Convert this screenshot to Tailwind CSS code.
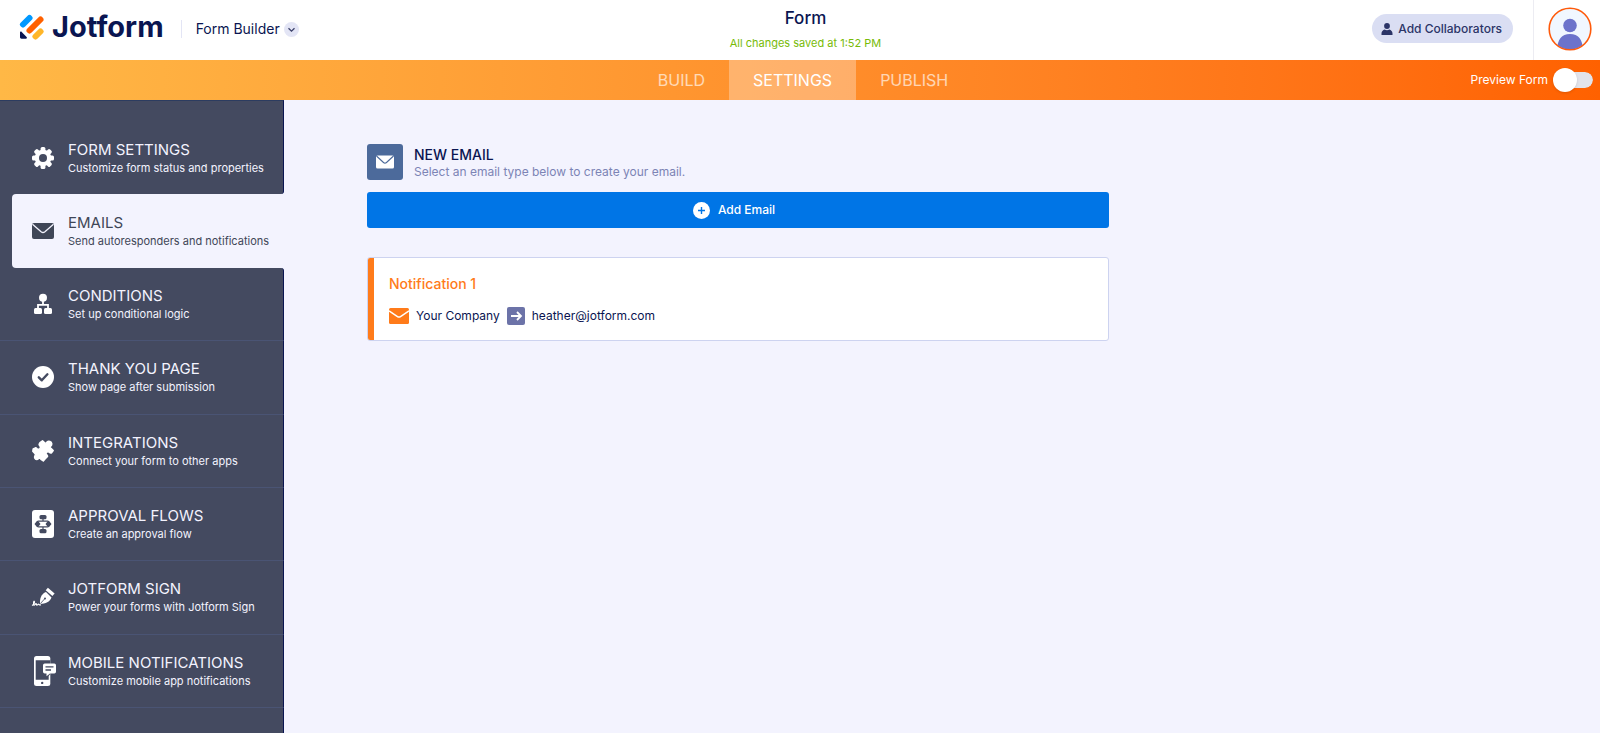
<!DOCTYPE html>
<html lang="en">
<head>
<meta charset="utf-8">
<title>Form Builder - Emails</title>
<script src="https://cdn.jsdelivr.net/npm/@tailwindcss/browser@4"></script>
</head>
<body class="flex min-h-screen flex-col bg-[#f3f3fe] font-['Inter','Liberation_Sans',sans-serif] text-[#0a1551]">

<header class="grid h-15 grid-cols-[1fr_auto_1fr] bg-white pr-2 pl-[19px]">
  <div class="flex items-center pb-[2px]">
    <a href="#" aria-label="Jotform" class="flex items-center gap-[7px] pb-1">
      <svg class="h-[26px] w-[26px]" viewBox="0 0 26 26" fill="none" stroke-linecap="round" stroke-width="6">
        <path d="M4 10.500 10.500 4" stroke="#0099ff"/>
        <path d="M10.500 16.500 21.500 5.500" stroke="#ff6100"/>
        <path d="M16.500 22.500 21.500 17.500" stroke="#ffb629"/>
        <path d="M1 18.600c0-.9 1-1.300 1.700-.7l4.900 5c.7.7.2 1.800-.7 1.800H2.500c-.8 0-1.500-.6-1.500-1.400z" fill="#0a1551"/>
      </svg>
      <span class="text-[29px] leading-8 font-bold">Jotform</span>
    </a>
    <span class="ml-[17px] h-[18px] w-px bg-[#e3e5f5]"></span>
    <button type="button" class="ml-[14px] flex items-center gap-1 text-[14px] leading-5">
      Form Builder
      <svg class="size-[15px]" viewBox="0 0 15 15"><circle cx="7.500" cy="7.500" r="7.500" fill="#e3e5f5"/><path d="m4.500 6.200 3 3 3-3" fill="none" stroke="#3b4169" stroke-width="1.300"/></svg>
    </button>
  </div>
  <div class="flex flex-col items-center pt-2">
    <h1 class="text-[17px] leading-5 font-medium">Form</h1>
    <p class="mt-[6px] text-[11px] leading-[18px] text-[#78bb07]">All changes saved at 1:52 PM</p>
  </div>
  <div class="flex items-center justify-end">
    <button type="button" class="mb-[3px] flex h-[29px] items-center gap-[5px] rounded-full bg-[#dadef3] pr-[11px] pl-[9px] text-[12px] font-medium text-[#2b3467]">
      <svg class="size-3" viewBox="0 0 12 12" fill="currentColor"><circle cx="6" cy="3" r="2.900"/><path d="M.5 12V10.500C.5 8.300 2 7.300 3.600 6.600c1.500.8 3.300.8 4.800 0C10 7.300 11.500 8.300 11.500 10.500V12z"/></svg>
      Add Collaborators
    </button>
    <span class="ml-5 h-full w-px bg-[#ececf2]"></span>
    <a href="#" aria-label="Account" class="mb-[3px] ml-[14px]">
      <svg class="size-11" viewBox="0 0 44 44">
        <defs><clipPath id="face"><circle cx="22" cy="22" r="20.500"/></clipPath></defs>
        <circle cx="22" cy="22" r="21" fill="#f1f7ff"/>
        <g clip-path="url(#face)" fill="#6c73cb"><circle cx="22" cy="18.500" r="6.800"/><path d="M9 45c0-12 4-18 13-18s13 6 13 18z"/></g>
        <circle cx="22" cy="22" r="20.800" fill="none" stroke="#ff5a0a" stroke-width="1.600"/>
      </svg>
    </a>
  </div>
</header>

<nav class="grid h-10 grid-cols-[1fr_auto_1fr] bg-linear-to-r from-[#ffb846] to-[#ff6100] pr-[7px] pl-[13px] text-white">
  <div></div>
  <div class="flex text-[16px]">
    <a href="#" class="flex items-center px-6 text-white/65">BUILD</a>
    <a href="#" aria-current="page" class="flex items-center bg-white/30 px-6">SETTINGS</a>
    <a href="#" class="flex items-center px-6 text-white/65">PUBLISH</a>
  </div>
  <label class="flex items-center justify-end gap-[5px] text-[12px]">
    Preview Form
    <span class="relative flex h-6 w-10 items-center">
      <input type="checkbox" class="peer h-4 w-full appearance-none rounded-full border-l-8 border-transparent bg-[#e2e3ea] bg-clip-padding">
      <span class="absolute left-0 size-6 rounded-full bg-white shadow-sm peer-checked:left-4"></span>
    </span>
  </label>
</nav>

<div class="flex flex-1">
  <aside class="flex w-[284px] shrink-0 flex-col text-[#f3f3fe]">
    <div class="h-[21px] border-t border-r border-[#0a1551] border-t-[#2c3c60] bg-[#444a60]"></div>
    <ul class="grid h-[587px] auto-rows-fr">
      <li class="rounded-br-[3px] border-r border-[#0a1551] bg-[#444a60]">
        <a href="#" class="flex h-full items-center gap-3 pl-[30px]">
          <svg class="size-[26px]" viewBox="0 0 26 26"><g fill="#fff"><circle cx="13" cy="13" r="8.300"/><g id="teeth"><rect x="10.600" y="2" width="4.800" height="22" rx="1.500"/><rect x="2" y="10.600" width="22" height="4.800" rx="1.500"/></g><use href="#teeth" transform="rotate(45 13 13)"/></g><circle cx="13" cy="13" r="4" fill="#444a60"/></svg>
          <span><span class="block text-[15px] leading-5">FORM SETTINGS</span><span class="block text-[11px] leading-4">Customize form status and properties</span></span>
        </a>
      </li>
      <li class="bg-[linear-gradient(to_right,#444a60_20px,#f3f3fe_20px)] pl-[12px] text-[#3f4657]">
        <a href="#" aria-current="page" class="flex h-full items-center gap-3 rounded-l-[4px] bg-[#f3f3fe] pl-[18px]">
          <svg class="size-[26px]" viewBox="0 0 26 26" fill="currentColor"><rect x="2" y="5" width="22" height="16" rx="2"/><path d="m2.500 6.200 8.600 7.500c1.200 1 2.600 1 3.800 0l8.600-7.500" fill="none" stroke="#f3f3fe" stroke-width="1.300"/></svg>
          <span><span class="block text-[15px] leading-5">EMAILS</span><span class="block text-[11px] leading-4">Send autoresponders and notifications</span></span>
        </a>
      </li>
      <li class="rounded-tr-[3px] border-r border-b border-[#0a1551] border-b-[#4a5474] bg-[#444a60]">
        <a href="#" class="flex h-full items-center gap-3 pl-[30px]">
          <svg class="size-[26px]" viewBox="0 0 26 26" fill="#fff"><circle cx="13" cy="6.800" r="4"/><path d="M13 10v4M8 19v-5.200h10V19" fill="none" stroke="#fff" stroke-width="1.800"/><rect x="4" y="17" width="8" height="6" rx="1.500"/><rect x="14" y="17" width="8" height="6" rx="1.500"/></svg>
          <span><span class="block text-[15px] leading-5">CONDITIONS</span><span class="block text-[11px] leading-4">Set up conditional logic</span></span>
        </a>
      </li>
      <li class="border-r border-b border-[#0a1551] border-b-[#4a5474] bg-[#444a60]">
        <a href="#" class="flex h-full items-center gap-3 pl-[30px]">
          <svg class="size-[26px]" viewBox="0 0 26 26"><circle cx="13" cy="13" r="11" fill="#fff"/><path d="m8.800 13.300 3 3 5.600-6" fill="none" stroke="#444a60" stroke-width="2.400" stroke-linecap="round" stroke-linejoin="round"/></svg>
          <span><span class="block text-[15px] leading-5">THANK YOU PAGE</span><span class="block text-[11px] leading-4">Show page after submission</span></span>
        </a>
      </li>
      <li class="border-r border-b border-[#0a1551] border-b-[#4a5474] bg-[#444a60]">
        <a href="#" class="flex h-full items-center gap-3 pl-[30px]">
          <svg class="size-[26px]" viewBox="0 0 26 26" fill="#fff" stroke="#fff" stroke-width="1.500" stroke-linejoin="round"><path d="M10 4.500 12.500 2.800 15 5c1.200.8 1.500-.3 2-1 1.600-1.400 4.500-.5 4.800 1.800.1 1.500-.8 2.200-1.600 3-.6.700.3 1.300 1 1.600l2 2.100-1.700 2.300c-1.200.9-1.800-.3-2.800-.9-1.300-.5-2.800.6-2.500 2 .3 1.100 1.700 1.500 1.300 2.600L15 21l-1.700 2-2.300-1.700c-.8-.6-.8-1.300-1.700-1.200-1 .3-1.200 1.700-2.600 1.500-1.800-.2-2.600-2.300-1.800-3.700.5-.8.900-1.300.4-2L2.800 13.300l.4-2.300L5.500 9.800c1-.2 1.300 1 2.300 1.500 1.500.4 2.900-1 2.600-2.400-.2-1-1.300-1.500-1.300-2.600z"/></svg>
          <span><span class="block text-[15px] leading-5">INTEGRATIONS</span><span class="block text-[11px] leading-4">Connect your form to other apps</span></span>
        </a>
      </li>
      <li class="border-r border-b border-[#0a1551] border-b-[#4a5474] bg-[#444a60]">
        <a href="#" class="flex h-full items-center gap-3 pl-[30px]">
          <svg class="h-[28px] w-[26px]" viewBox="0 0 26 28"><rect x="2" y="0" width="22" height="28" rx="3" fill="#fff"/><g fill="#444a60"><rect x="9.500" y="5" width="7" height="4.200" rx="1.500"/><rect x="9.500" y="19" width="7" height="4.200" rx="1.500"/><path d="m4.500 14 2-2.500h2l2 2.500-2 2.500h-2zM15.500 14l2-2.500h2l2 2.500-2 2.500h-2z"/></g><path d="M13 9v2.500M13 16.500V19M7 12.500c0-1 .7-1.300 1.500-1.300h9c.8 0 1.500.3 1.500 1.300M7 15.500c0 1 .7 1.300 1.500 1.300h9c.8 0 1.500-.3 1.500-1.300" fill="none" stroke="#444a60" stroke-width="1.200"/></svg>
          <span><span class="block text-[15px] leading-5">APPROVAL FLOWS</span><span class="block text-[11px] leading-4">Create an approval flow</span></span>
        </a>
      </li>
      <li class="border-r border-b border-[#0a1551] border-b-[#4a5474] bg-[#444a60]">
        <a href="#" class="flex h-full items-center gap-3 pl-[30px]">
          <svg class="size-[26px]" viewBox="0 0 26 26"><path d="M10 20c-.3-5.500 1-10 6-12l5.500 5.500c-1.500 4.500-6 6-11.500 6.500z" fill="#fff"/><path d="m16.800 5 6.700 5.700" stroke="#fff" stroke-width="3.400"/><path d="m10.300 19.700 4.200-4.700" stroke="#444a60" stroke-width=".8"/><circle cx="15" cy="14.500" r="1" fill="#444a60"/><path d="M2 21.500c2-1 3-3.500 2.300-4.200-.9-.6-1 3.600-.3 3.900.8.300 1.300-1.600 2-1.600s.2 1.600.9 1.600 1-1 1.600-1 .5 1 2.500.6" fill="none" stroke="#fff" stroke-width="1.200"/></svg>
          <span><span class="block text-[15px] leading-5">JOTFORM SIGN</span><span class="block text-[11px] leading-4">Power your forms with Jotform Sign</span></span>
        </a>
      </li>
      <li class="border-r border-b border-[#0a1551] border-b-[#4a5474] bg-[#444a60]">
        <a href="#" class="flex h-full items-center gap-3 pl-[30px]">
          <svg class="h-[30px] w-[26px]" viewBox="0 0 26 30"><path d="M6.500 0h11.300a2.500 2.500 0 0 1 2.500 2.500V27.500a2.500 2.500 0 0 1-2.500 2.500H6.500A2.500 2.500 0 0 1 4 27.500v-25A2.500 2.500 0 0 1 6.500 0z" fill="#fff"/><path d="M5.700 4.300h14.600V18l-1.600 2v3.800h-13z" fill="#444a60"/><circle cx="12.200" cy="26.900" r="1.200" fill="#444a60"/><path d="M14.700 7.500h9.600a1.700 1.700 0 0 1 1.700 1.700v6.500a1.700 1.700 0 0 1-1.700 1.700H20l-3.500 2.900v-2.900h-1.800a1.700 1.700 0 0 1-1.700-1.700V9.200a1.700 1.700 0 0 1 1.700-1.700z" fill="#fff"/><path d="M15.500 10.800h8M15.500 14h5.500" stroke="#444a60" stroke-width="1.300"/></svg>
          <span><span class="block text-[15px] leading-5">MOBILE NOTIFICATIONS</span><span class="block text-[11px] leading-4">Customize mobile app notifications</span></span>
        </a>
      </li>
    </ul>
    <div class="flex-1 border-r border-[#0a1551] bg-[#444a60]"></div>
  </aside>

  <main class="flex-1 px-[83px] pt-[43px]">
    <div class="max-w-[742px]">
      <div class="flex items-center gap-[11px]">
        <span class="flex size-9 items-center justify-center rounded-[3px] bg-[#4c6a9b]">
          <svg class="size-5" viewBox="0 0 20 20"><rect x="1" y="3.500" width="18" height="13" rx="1.500" fill="#fff"/><path d="m1.500 4 7 6.500c.9.800 2.100.8 3 0l7-6.500" fill="none" stroke="#4c6a9b" stroke-width="1.100"/></svg>
        </span>
        <div class="pt-[3px]">
          <h2 class="text-[14px] leading-[18px] font-medium">NEW EMAIL</h2>
          <p class="text-[12px] leading-4 text-[#7c84b5]">Select an email type below to create your email.</p>
        </div>
      </div>
      <button type="button" class="mt-3 flex h-9 w-full items-center justify-center gap-2 rounded-[3px] bg-[#0075e6] pr-2 text-[12px] font-medium text-white">
        <svg class="size-[17px]" viewBox="0 0 17 17"><circle cx="8.500" cy="8.500" r="8.500" fill="#fff"/><path d="M8.500 5v7M5 8.500h7" stroke="#0075e6" stroke-width="1.400"/></svg>
        Add Email
      </button>
      <section class="mt-[29px] flex overflow-hidden rounded-[3px] border border-[#cdd3f0] bg-white">
        <div class="w-[6px] bg-[#ff7b1a]"></div>
        <div class="px-[15px] pt-4 pb-[14px]">
          <h3 class="text-[14px] leading-5 font-medium text-[#ff7b1a]">Notification 1</h3>
          <div class="mt-3 flex items-center gap-[7px] text-[12px] leading-5">
            <svg class="h-4 w-5" viewBox="0 0 20 16"><rect width="20" height="16" rx="1.500" fill="#ff7b1a"/><path d="m0 2.800 8.500 5.800c.9.600 2.100.6 3 0L20 2.800" fill="none" stroke="#fff" stroke-width="1.500"/></svg>
            <span>Your Company</span>
            <svg class="size-[18px]" viewBox="0 0 18 18"><rect width="18" height="18" rx="2" fill="#6c73a8"/><path d="M4 9h9.500M10 5l4 4-4 4" fill="none" stroke="#fff" stroke-width="1.800"/></svg>
            <span>heather@jotform.com</span>
          </div>
        </div>
      </section>
    </div>
  </main>
</div>
</body>
</html>
